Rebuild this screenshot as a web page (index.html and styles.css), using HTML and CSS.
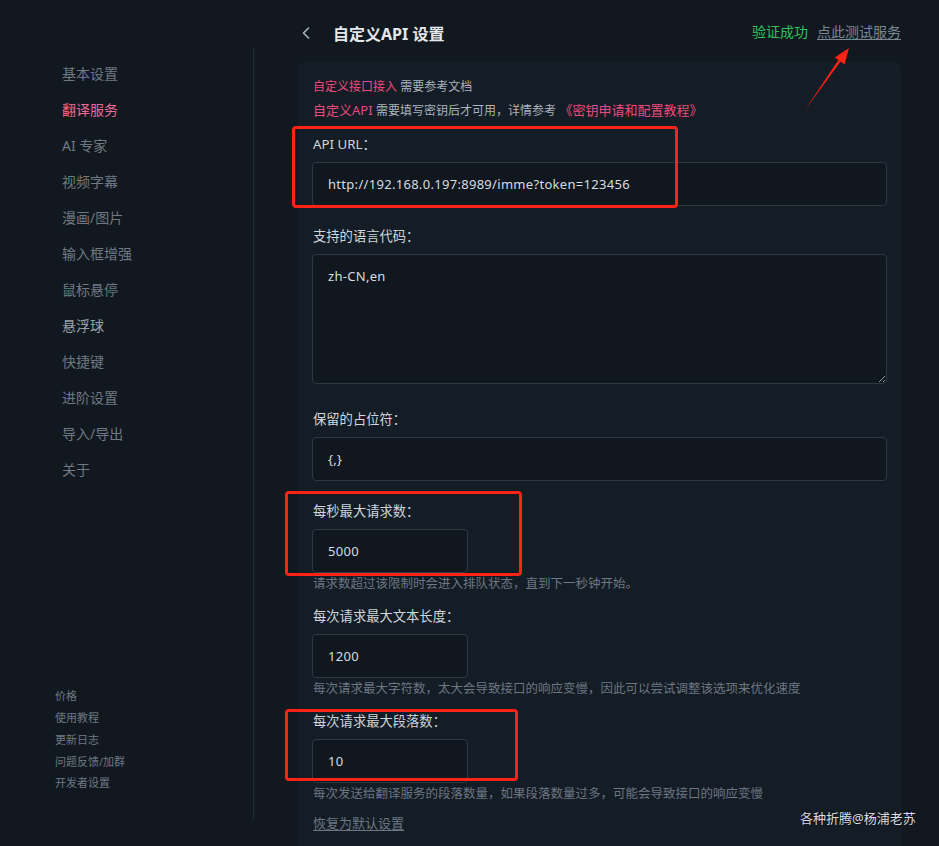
FILE: index.html
```html
<!DOCTYPE html>
<html lang="zh-CN">
<head>
<meta charset="utf-8">
<title>自定义API 设置</title>
<link rel="stylesheet" href="styles.css">
</head>
<body>
<div class="page">
  <aside class="sidebar">
    <nav class="nav">
      <div class="nav-item">基本设置</div>
      <div class="nav-item active">翻译服务</div>
      <div class="nav-item">AI 专家</div>
      <div class="nav-item">视频字幕</div>
      <div class="nav-item">漫画/图片</div>
      <div class="nav-item">输入框增强</div>
      <div class="nav-item">鼠标悬停</div>
      <div class="nav-item bright">悬浮球</div>
      <div class="nav-item">快捷键</div>
      <div class="nav-item">进阶设置</div>
      <div class="nav-item">导入/导出</div>
      <div class="nav-item">关于</div>
    </nav>
    <div class="links">
      <div class="link">价格</div>
      <div class="link">使用教程</div>
      <div class="link">更新日志</div>
      <div class="link">问题反馈/加群</div>
      <div class="link">开发者设置</div>
    </div>
  </aside>
  <main class="main">
    <header class="header">
      <div class="head-left">
        <svg class="chev" width="10" height="14" viewBox="0 0 10 14"><path d="M7.5 2 L2.5 7 L7.5 12" fill="none" stroke="#aab2ba" stroke-width="1.6" stroke-linecap="round" stroke-linejoin="round"/></svg>
        <h1 class="title">自定义API 设置</h1>
      </div>
      <div class="head-right">
        <span class="ok">验证成功</span>
        <span class="test">点此测试服务</span>
      </div>
    </header>
    <section class="card">
      <div class="intro1"><span class="pink">自定义接口接入</span> <span class="gray">需要参考文档</span></div>
      <div class="intro2"><span class="pink">自定义API</span> <span class="gray">需要填写密钥后才可用，详情参考</span> <span class="pink">《密钥申请和配置教程》</span></div>

      <div class="field">
        <div class="label">API URL：</div>
        <div class="input">http://192.168.0.197:8989/imme?token=123456</div>
      </div>
      <div class="field f-area">
        <div class="label">支持的语言代码：</div>
        <textarea class="area">zh-CN,en</textarea>
      </div>
      <div class="field">
        <div class="label">保留的占位符：</div>
        <div class="input">{,}</div>
      </div>
      <div class="field f-help">
        <div class="label">每秒最大请求数：</div>
        <div class="input small">5000</div>
        <div class="help">请求数超过该限制时会进入排队状态，直到下一秒钟开始。</div>
      </div>
      <div class="field f-help">
        <div class="label">每次请求最大文本长度：</div>
        <div class="input small">1200</div>
        <div class="help">每次请求最大字符数，太大会导致接口的响应变慢，因此可以尝试调整该选项来优化速度</div>
      </div>
      <div class="field f-last">
        <div class="label">每次请求最大段落数：</div>
        <div class="input small">10</div>
        <div class="help">每次发送给翻译服务的段落数量，如果段落数量过多，可能会导致接口的响应变慢</div>
      </div>
      <div class="reset">恢复为默认设置</div>
    </section>
  </main>
</div>

<div class="mark box1"></div>
<div class="mark box2"></div>
<div class="mark box3"></div>
<svg class="arrow" width="939" height="846" viewBox="0 0 939 846">
  <polygon points="805,110 840.6,61.6 844.6,64.6 849,48 834.8,57.6 838.4,59.9" fill="#ff2216"/>
</svg>
<div class="watermark">各种折腾@杨浦老苏</div>
</body>
</html>
```
FILE: styles.css
```css
html, body {
  margin: 0;
  padding: 0;
  background: #11181f;
  overflow: hidden;
}
body {
  width: 939px;
  height: 846px;
  position: relative;
  font-family: "Noto Sans", "Noto Sans CJK SC", sans-serif;
  color: #c9d1d9;
  text-spacing-trim: space-all;
}
.page {
  display: flex;
  height: 846px;
}
.sidebar {
  width: 254px;
  box-sizing: border-box;
  margin-top: 48px;
  height: 772px;
  border-right: 1px solid #222b35;
  display: flex;
  flex-direction: column;
  justify-content: space-between;
  padding: 8px 0 26px 0;
  flex-shrink: 0;
}
.nav-item {
  padding-left: 62px;
  font-size: 14px;
  line-height: 36px;
  color: #6f7983;
}
.nav-item.active { color: #ea6a98; }
.nav-item.bright { color: #98a1a9; }
.links { padding-left: 55px; }
.link {
  font-size: 11px;
  line-height: 21.75px;
  color: #6f7983;
}
.main {
  padding-left: 44px;
  width: 603px;
}
.header {
  height: 62px;
  display: flex;
  align-items: center;
  justify-content: space-between;
  padding-top: 4px;
  box-sizing: border-box;
}
.head-left {
  display: flex;
  align-items: center;
  padding-left: 3px;
}
.chev { margin-right: 22px; }
.title {
  margin: 0;
  font-size: 16px;
  font-weight: 700;
  color: #e4e7ea;
}
.head-right {
  display: flex;
  gap: 9px;
  font-size: 14px;
  position: relative;
  top: -2px;
}
.ok { color: #2fc35c; }
.test {
  color: #7b8894;
  text-decoration: underline;
  text-underline-offset: 2px;
}
.card {
  background: #141c25;
  border-radius: 6px 6px 0 0;
  padding: 16px 14px 40px 14px;
  min-height: 900px;
  box-sizing: border-box;
}
.intro1 {
  font-size: 12px;
  line-height: 18px;
  padding-left: 1px;
}
.intro2 {
  font-size: 13px;
  line-height: 22px;
  margin-top: 3px;
  margin-bottom: 12px;
  padding-left: 1px;
}
.intro2 .gray { font-size: 12px; }
.pink { color: #ec4a7c; }
.gray { color: #aab3bc; }
.field { margin-bottom: 20px; }
.f-area { margin-bottom: 25px; }
.f-help { margin-bottom: 13px; }
.f-last { margin-bottom: 11px; }
.label {
  font-size: 13.3px;
  line-height: 20px;
  margin-bottom: 8px;
  padding-left: 1px;
  color: #cfd5db;
}
.input {
  height: 44px;
  box-sizing: border-box;
  border: 1px solid #2d3945;
  border-radius: 4px;
  background: #10171e;
  padding: 0 15px;
  font-size: 13px;
  line-height: 42px;
  letter-spacing: 0.3px;
  color: #d6dce2;
}
.input.small { width: 156px; }
.area {
  display: block;
  width: 100%;
  height: 130px;
  box-sizing: border-box;
  border: 1px solid #2d3945;
  border-radius: 4px;
  background: #10171e;
  padding: 11px 15px;
  font-family: "Noto Sans", "Noto Sans CJK SC", sans-serif;
  font-size: 13px;
  line-height: 20px;
  letter-spacing: 0.3px;
  color: #d6dce2;
  margin: 0;
  outline: none;
}
.help {
  margin-top: 2px;
  font-size: 12.5px;
  line-height: 18px;
  color: #6c7782;
  padding-left: 1px;
}
.reset {
  font-size: 13px;
  line-height: 18px;
  color: #6c7782;
  text-decoration: underline;
  text-underline-offset: 2px;
  padding-left: 1px;
}
.mark {
  position: absolute;
  border: 3px solid #ff2216;
  border-radius: 4px;
  box-sizing: border-box;
}
.box1 { left: 292px; top: 126px; width: 386px; height: 82px; }
.box2 { left: 285px; top: 491px; width: 237px; height: 85px; }
.box3 { left: 285px; top: 709px; width: 233px; height: 72px; }
.arrow {
  position: absolute;
  left: 0;
  top: 0;
  pointer-events: none;
}
.watermark {
  position: absolute;
  left: 800px;
  top: 808px;
  font-size: 13px;
  line-height: 20px;
  color: #d9dcdf;
  text-shadow: 0 0 2px rgba(0,0,0,0.6);
}
```
